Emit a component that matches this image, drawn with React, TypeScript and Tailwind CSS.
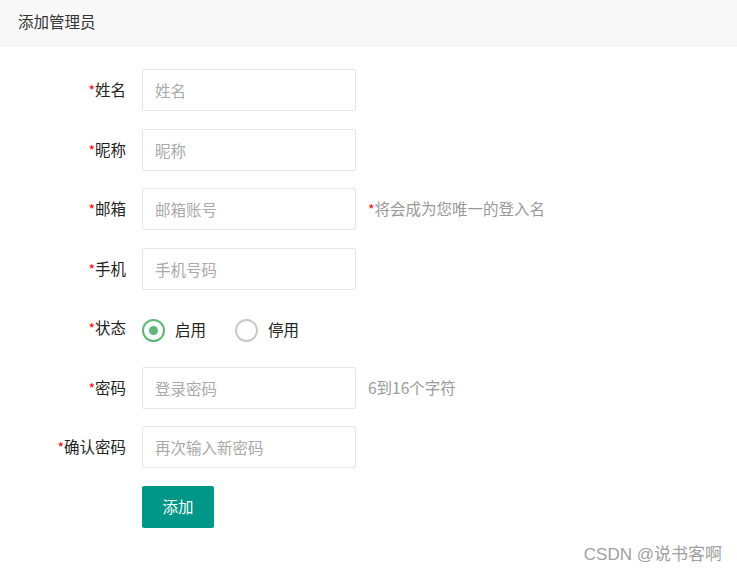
const fields = [
  { label: "姓名", placeholder: "姓名" },
  { label: "昵称", placeholder: "昵称" },
  { label: "邮箱", placeholder: "邮箱账号", hint: "将会成为您唯一的登入名", star: true },
  { label: "手机", placeholder: "手机号码" },
];

const pwdFields = [
  { label: "密码", placeholder: "登录密码", hint: "6到16个字符" },
  { label: "确认密码", placeholder: "再次输入新密码" },
];

type Field = { label: string; placeholder: string; hint?: string; star?: boolean };

const Label = ({ text }: { text: string }) => (
  <div className="w-[126px] shrink-0 text-right text-[15.5px] text-[#222]">
    <span className="text-[#ff0000] text-[14px]">*</span>
    {text}
  </div>
);

const Row = ({ f }: { f: Field }) => (
  <div className="flex h-[42px] items-center">
    <Label text={f.label} />
    <input
      type="text"
      placeholder={f.placeholder}
      className="ml-4 h-[42px] w-[214px] rounded-[2px] border border-[#e6e6e6] bg-white px-3 text-[15.5px] text-[#333] outline-none placeholder:text-[#a9a9a9]"
    />
    {f.hint && (
      <div className="ml-3 text-[15.5px] text-[#999]">
        {f.star && <span className="text-[#ff0000] text-[14px]">*</span>}
        {f.hint}
      </div>
    )}
  </div>
);

const Radio = ({ checked, text }: { checked?: boolean; text: string }) => (
  <label className="flex items-center cursor-pointer">
    <span
      className={`flex h-[23px] w-[23px] items-center justify-center rounded-full border-2 ${
        checked ? "border-[#5fb878]" : "border-[#c9c9c9]"
      }`}
    >
      {checked && <span className="h-[9px] w-[9px] rounded-full bg-[#5fb878]" />}
    </span>
    <span className="ml-[10px] text-[15.5px] text-[#222]">{text}</span>
  </label>
);

export default function App() {
  return (
    <div
      className="min-h-[575px] bg-white relative"
      style={{ fontFamily: '"Noto Sans CJK SC", "Noto Sans", sans-serif' }}
    >
      <div className="flex h-[46px] items-center border-b border-[#eeeeee] bg-[#f8f8f8] pl-[18px] pb-[2px] text-[15.5px] text-[#333]">
        添加管理员
      </div>

      <form className="flex flex-col gap-[17.5px] pt-[23px]">
        {fields.map((f) => (
          <Row key={f.label} f={f} />
        ))}
        <div className="flex h-[42px] items-center">
          <Label text="状态" />
          <div className="ml-4 flex items-center gap-[29px] pt-[4px]">
            <Radio checked text="启用" />
            <Radio text="停用" />
          </div>
        </div>
        {pwdFields.map((f) => (
          <Row key={f.label} f={f} />
        ))}
        <div className="flex h-[42px]">
          <div className="w-[126px]" />
          <button
            type="button"
            className="ml-4 h-[42px] w-[72px] rounded-[2px] bg-[#009688] text-[15.5px] text-white"
          >
            添加
          </button>
        </div>
      </form>

      <div
        className="absolute right-[15px] bottom-[8px] text-[17px] text-[#a0a0a0]"
        style={{ fontFamily: '"Liberation Sans", "Noto Sans CJK SC", sans-serif' }}
      >
        CSDN @说书客啊
      </div>
    </div>
  );
}
